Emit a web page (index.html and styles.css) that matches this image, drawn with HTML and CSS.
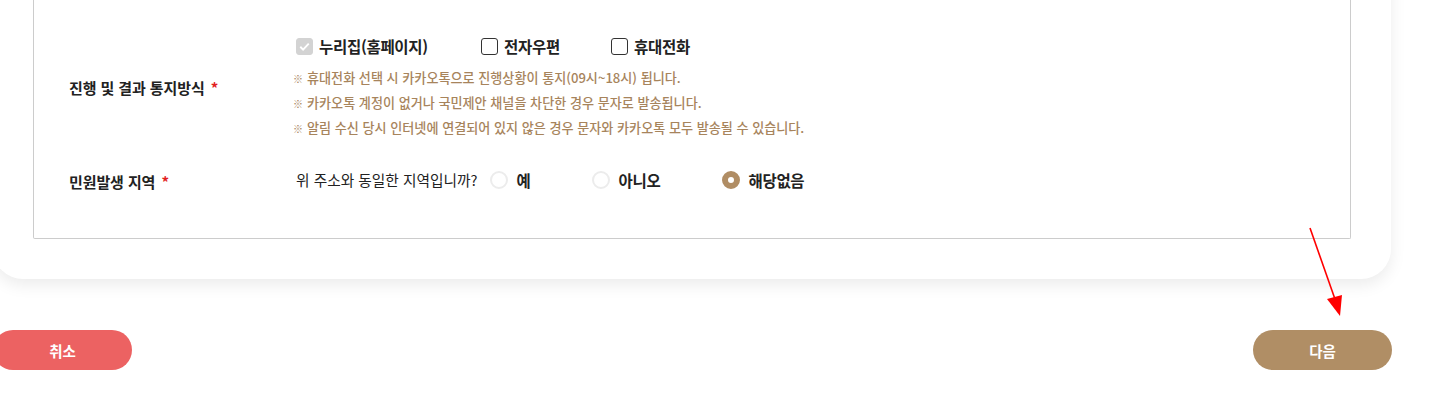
FILE: index.html
```html
<!DOCTYPE html>
<html lang="ko">
<head>
<meta charset="utf-8">
<title>민원 신청</title>
<link rel="stylesheet" href="styles.css">
</head>
<body>
<div class="page">
  <section class="card">
    <div class="form-box">
      <div class="form-row row-notify">
        <div class="label">진행 및 결과 통지방식 <span class="req">*</span></div>
        <div class="field">
          <div class="checks">
            <label class="check disabled"><span class="box checked"><svg viewBox="0 0 16 16"><path d="M3.5 8.3l3 3 6-6.3" fill="none" stroke="#fff" stroke-width="2"/></svg></span>누리집(홈페이지)</label>
            <label class="check"><span class="box"></span>전자우편</label>
            <label class="check"><span class="box"></span>휴대전화</label>
          </div>
          <ul class="notes">
            <li>휴대전화 선택 시 카카오톡으로 진행상황이 통지(09시~18시) 됩니다.</li>
            <li>카카오톡 계정이 없거나 국민제안 채널을 차단한 경우 문자로 발송됩니다.</li>
            <li>알림 수신 당시 인터넷에 연결되어 있지 않은 경우 문자와 카카오톡 모두 발송될 수 있습니다.</li>
          </ul>
        </div>
      </div>
      <div class="form-row row-area">
        <div class="label">민원발생 지역 <span class="req">*</span></div>
        <div class="field radios">
          <span class="question">위 주소와 동일한 지역입니까?</span>
          <label class="radio r-yes"><span class="dot"></span>예</label>
          <label class="radio r-no"><span class="dot"></span>아니오</label>
          <label class="radio r-na"><span class="dot on"></span>해당없음</label>
        </div>
      </div>
    </div>
  </section>
  <div class="actions">
    <button class="btn btn-cancel">취소</button>
    <button class="btn btn-next">다음</button>
  </div>
  <svg class="annot" width="60" height="100" viewBox="0 0 60 100">
    <line x1="10" y1="8" x2="36" y2="82" stroke="#f00" stroke-width="1.6"/>
    <polygon points="27,79 42,75 40,96" fill="#f00"/>
  </svg>
</div>
</body>
</html>
```

FILE: styles.css
```css
* { box-sizing: border-box; }
html, body { margin: 0; padding: 0; background: #fff; }
body {
  font-family: "Noto Sans CJK KR", "Noto Sans", sans-serif;
  color: #222;
  overflow: hidden;
}
.page {
  position: relative;
  width: 1398px;
  margin: -30px 0 0 -7px;
}
.card {
  background: #fff;
  border-radius: 0 0 30px 30px;
  padding: 0 40px 40px 40px;
  box-shadow: 0 6px 16px rgba(0, 0, 0, 0.08);
}
.form-box {
  border: 1px solid #cccccc;
  border-top: none;
  border-radius: 0 0 2px 2px;
  padding: 64px 0 46px 35px;
}
.form-row {
  display: grid;
  grid-template-columns: 227px 1fr;
  align-items: center;
}
.row-area { margin-top: 26px; }
.label {
  font-size: 15px;
  font-weight: 700;
  color: #222;
  letter-spacing: -0.1px;
}
.row-notify .label { padding-top: 0; }
.row-area .label { padding-top: 4px; }
.req { color: #e21f1f; font-weight: 700; margin-left: 2px; }
.checks {
  display: flex;
  align-items: center;
  height: 24px;
  margin-bottom: 8px;
}
.check {
  display: flex;
  align-items: center;
  font-size: 15.5px;
  font-weight: 700;
  color: #222;
  letter-spacing: -0.3px;
}
.check:nth-child(1) { width: 185px; }
.check:nth-child(2) { width: 130px; }
.box {
  width: 17px;
  height: 17px;
  border: 1px solid #333;
  border-radius: 3px;
  margin-right: 6px;
  background: #fff;
  display: inline-flex;
  align-items: center;
  justify-content: center;
}
.box.checked {
  background: #d3d3d3;
  border-color: #d3d3d3;
}
.box svg { width: 15px; height: 15px; }
.notes {
  list-style: none;
  margin: 3px 0 0 -3px;
  padding: 0;
}
.notes li {
  font-size: 13.1px;
  font-weight: 500;
  line-height: 24px;
  color: #a7845c;
  letter-spacing: 0;
}
.notes li::before {
  content: "※";
  font-size: 10px;
  font-weight: 700;
  margin-right: 4px;
}
.radios {
  display: flex;
  align-items: center;
  height: 24px;
}
.question {
  font-size: 14.7px;
  color: #222;
  margin-right: 13px;
}
.radio {
  display: flex;
  align-items: center;
  font-size: 15.5px;
  font-weight: 700;
  color: #222;
  letter-spacing: -0.3px;
}
.r-yes { width: 102px; }
.r-no { width: 130px; }
.dot {
  width: 18px;
  height: 18px;
  border: 2px solid #ececec;
  border-radius: 50%;
  margin-right: 8px;
  background: #fff;
}
.dot.on {
  border: 6px solid #b08d64;
  background: #fff;
}
.actions {
  display: flex;
  justify-content: space-between;
  margin-top: 51px;
}
.btn {
  width: 139px;
  height: 40px;
  border: none;
  border-radius: 20px;
  color: #fff;
  font-family: "Noto Sans CJK KR", "Noto Sans", sans-serif;
  font-size: 14.5px;
  font-weight: 700;
  cursor: pointer;
}
.btn-cancel { background: #ec6262; }
.btn-next { background: #b08e65; margin-right: -1px; }
.annot {
  position: absolute;
  left: 1307px;
  top: 250px;
}
```
